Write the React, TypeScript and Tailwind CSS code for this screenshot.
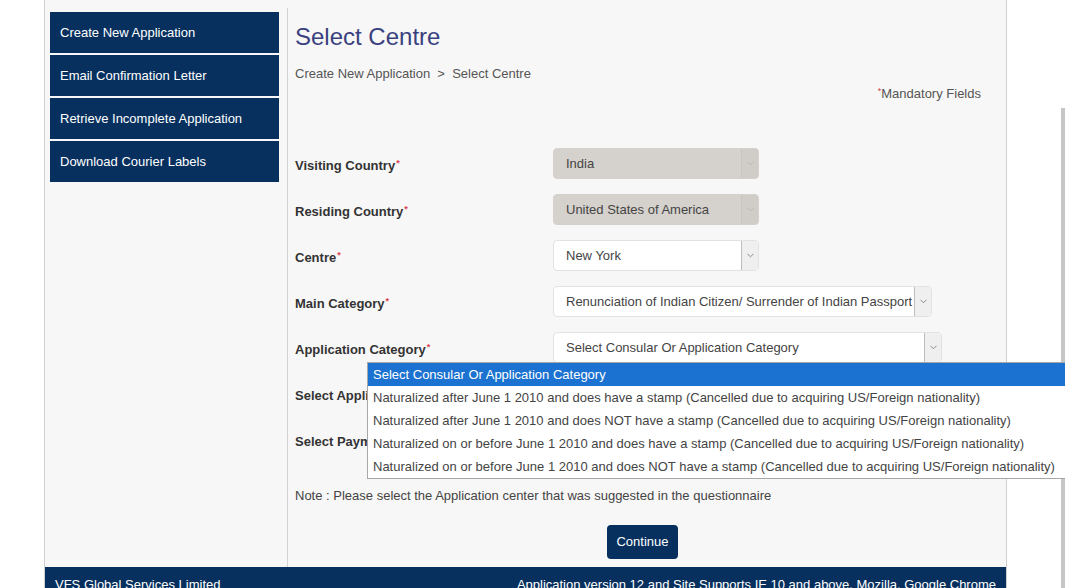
import React from "react";

const navy = "bg-[#07305e]";

function Star() {
    return <span className="text-[#d9434f] text-[9px] relative -top-[4px] ml-[1px]">*</span>;
}

function Chevron({ color }: { color: string }) {
    return (
        <svg width="7" height="5" viewBox="0 0 7 5">
            <path d="M0.5 0.8 L3.5 3.8 L6.5 0.8" fill="none" stroke={color} strokeWidth="1" />
        </svg>
    );
}

function Select({ value, width, disabled, children }: { value: string; width: string; disabled?: boolean; children?: React.ReactNode }) {
    return (
        <div
            className={
                "relative flex h-[31px] rounded-[4px] border " +
                width +
                (disabled ? " bg-[#d5d1cc] border-[#d5d1cc]" : " bg-white border-[#e2e2e2]")
            }
        >
            <div className="flex-1 flex items-center pl-[12px] text-[13px] text-[#444] whitespace-nowrap overflow-hidden">{value}</div>
            <div
                className={
                    "w-[17px] flex items-center justify-center rounded-r-[3px] border-l " +
                    (disabled ? "border-[#c9c5c0] bg-[#d0ccc7]" : "border-[#bdbdbd] bg-[#efefef]")
                }
            >
                <Chevron color={disabled ? "#bdb9b4" : "#8a8a8a"} />
            </div>
            {children}
        </div>
    );
}

function Row({ label, clip, children }: { label: string; clip?: boolean; children?: React.ReactNode }) {
    return (
        <div className="flex items-center h-[31px]">
            <div className="w-[258px] pt-[4px] text-[13px] font-bold text-[#333] whitespace-nowrap">
                {clip ? (
                    // the open list covers the rest of this label
                    <div className="w-[72px] overflow-hidden">{label}</div>
                ) : (
                    <>
                        {label}
                        <Star />
                    </>
                )}
            </div>
            {children}
        </div>
    );
}

const options = [
    "Select Consular Or Application Category",
    "Naturalized after June 1 2010 and does have a stamp (Cancelled due to acquiring US/Foreign nationality)",
    "Naturalized after June 1 2010 and does NOT have a stamp (Cancelled due to acquiring US/Foreign nationality)",
    "Naturalized on or before June 1 2010 and does have a stamp (Cancelled due to acquiring US/Foreign nationality)",
    "Naturalized on or before June 1 2010 and does NOT have a stamp (Cancelled due to acquiring US/Foreign nationality)",
];

const menu = ["Create New Application", "Email Confirmation Letter", "Retrieve Incomplete Application", "Download Courier Labels"];

export default function App() {
    return (
        <div className="relative w-[1065px] h-[588px] overflow-hidden bg-white font-['Liberation_Sans',Arial,sans-serif]">
            <div className="ml-[44px] w-[963px] h-[588px] flex flex-col border-x border-[#cfcfcf] bg-[#f8f7f7]">
                <div className="flex h-[567px] shrink-0">
                    <div className="w-[242px] pl-[5px] pt-[12px] flex flex-col gap-[2px]">
                        {menu.map((m) => (
                            <div key={m} className={"w-[229px] h-[41px] flex items-center pl-[10px] text-[13px] text-white " + navy}>
                                {m}
                            </div>
                        ))}
                    </div>
                    <div className="flex-1 mt-[8px] border-l border-[#d2d2d2] pl-[7px] pr-[25px] flex flex-col">
                        <h1 className="mt-[14px] text-[24px] leading-[29px] text-[#39417f]">Select Centre</h1>
                        <div className="mt-[14px] text-[13px] leading-[18px] text-[#555]">
                            Create New Application&nbsp;&nbsp;&gt;&nbsp;&nbsp;Select Centre
                        </div>
                        <div className="mt-[2px] text-right text-[13px] leading-[18px] text-[#555]">
                            <span className="text-[#d9434f] text-[9px] relative -top-[4px]">*</span>Mandatory Fields
                        </div>
                        <div className="mt-[44px] flex flex-col gap-[15px]">
                            <Row label="Visiting Country">
                                <Select value="India" width="w-[206px]" disabled />
                            </Row>
                            <Row label="Residing Country">
                                <Select value="United States of America" width="w-[206px]" disabled />
                            </Row>
                            <Row label="Centre">
                                <Select value="New York" width="w-[206px]" />
                            </Row>
                            <Row label="Main Category">
                                <Select value="Renunciation of Indian Citizen/ Surrender of Indian Passport" width="w-[379px]" />
                            </Row>
                            <Row label="Application Category">
                                <Select value="Select Consular Or Application Category" width="w-[389px]">
                                    <div className="absolute z-10 top-[29px] left-[-187px] w-[700px] bg-white border border-[#a7a7a7]">
                                        {options.map((o, i) => (
                                            <div
                                                key={o}
                                                className={
                                                    "h-[23px] flex items-center pl-[5px] text-[13px] whitespace-nowrap " +
                                                    (i === 0 ? "bg-[#1b72d0] text-white" : "text-[#444]")
                                                }
                                            >
                                                {o}
                                            </div>
                                        ))}
                                    </div>
                                </Select>
                            </Row>
                            <Row label="Select Application Type" clip>
                                <Select value="" width="w-[206px]" />
                            </Row>
                            <Row label="Select Payment Mode" clip>
                                <Select value="" width="w-[206px]" />
                            </Row>
                        </div>
                        <div className="mt-[32px] text-[13px] leading-[18px] text-[#444]">
                            Note : Please select the Application center that was suggested in the questionnaire
                        </div>
                        <div className="mt-[20px] pl-[312px]">
                            <button className={"w-[71px] h-[34px] rounded-[4px] text-[13px] text-white " + navy}>Continue</button>
                        </div>
                    </div>
                </div>
                <div className={"h-[36px] shrink-0 flex justify-between px-[10px] pt-[9px] text-[13px] leading-[18px] text-white " + navy}>
                    <span>VFS Global Services Limited</span>
                    <span>Application version 12 and Site Supports IE 10 and above, Mozilla, Google Chrome</span>
                </div>
            </div>
            <div className="absolute right-0 top-[108px] bottom-0 w-[4px] bg-[#c6c6c6]" />
        </div>
    );
}
